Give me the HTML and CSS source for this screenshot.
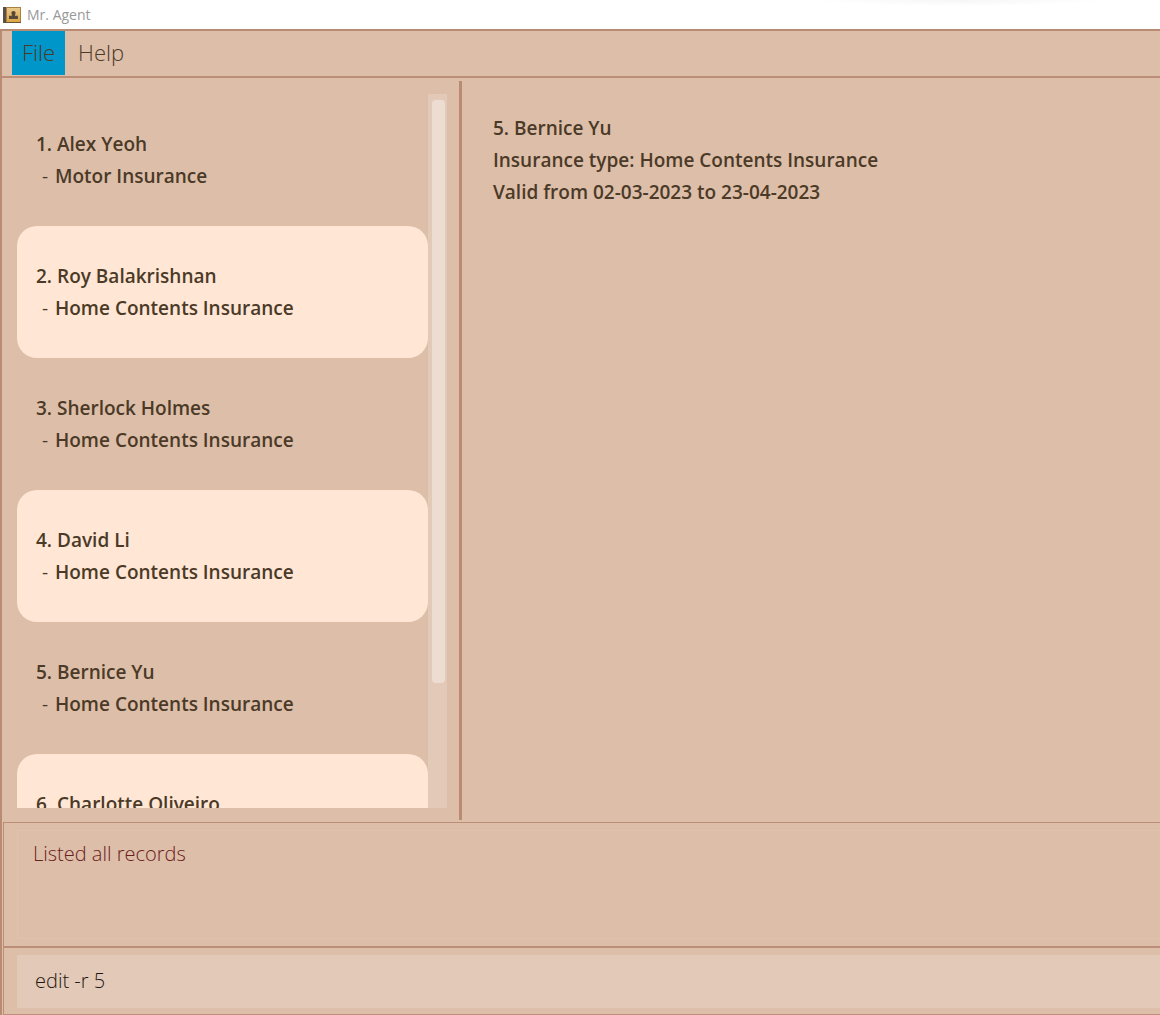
FILE: index.html
```html
<!DOCTYPE html>
<html lang="en">
<head>
<meta charset="utf-8">
<title>Mr. Agent</title>
<link rel="stylesheet" href="styles.css">
</head>
<body>
<div class="window">
  <header class="titlebar">
    <svg class="app-icon" viewBox="0 0 18 16" aria-hidden="true">
      <defs>
        <linearGradient id="cover" x1="0" y1="0" x2="0" y2="1">
          <stop offset="0" stop-color="#e8ca8c"/>
          <stop offset="1" stop-color="#dba544"/>
        </linearGradient>
      </defs>
      <rect width="18" height="16" fill="#a98142"/>
      <rect width="3" height="16" fill="#5b4d48"/>
      <rect y="15" width="18" height="1" fill="#6b5335"/>
      <rect x="4" y="1" width="13" height="14" fill="url(#cover)"/>
      <path d="M10.500 4c1.400 0 2.100.800 2.100 2 0 1-.700 1.500-.700 2.700h3V12H6V8.700h3c0-1.200-.600-1.700-.600-2.700 0-1.200.700-2 2.100-2z" fill="#57493a"/>
    </svg>
    <span class="title">Mr. Agent</span>
    <span class="shade"></span>
  </header>
  <div class="app">
    <nav class="menubar">
      <button class="menu active" type="button">File</button>
      <button class="menu" type="button">Help</button>
    </nav>
    <main class="content">
      <section class="list-pane">
        <ol class="records">
          <li class="record"><span>1. Alex Yeoh</span><span class="policy"><i class="dash">-</i>Motor Insurance</span></li>
          <li class="record"><span>2. Roy Balakrishnan</span><span class="policy"><i class="dash">-</i>Home Contents Insurance</span></li>
          <li class="record"><span>3. Sherlock Holmes</span><span class="policy"><i class="dash">-</i>Home Contents Insurance</span></li>
          <li class="record"><span>4. David Li</span><span class="policy"><i class="dash">-</i>Home Contents Insurance</span></li>
          <li class="record"><span>5. Bernice Yu</span><span class="policy"><i class="dash">-</i>Home Contents Insurance</span></li>
          <li class="record"><span>6. Charlotte Oliveiro</span></li>
        </ol>
        <div class="scrollbar"><div class="thumb"></div></div>
      </section>
      <section class="detail">
        <p>5. Bernice Yu</p>
        <p>Insurance type: Home Contents Insurance</p>
        <p>Valid from 02-03-2023 to 23-04-2023</p>
      </section>
    </main>
    <section class="result"><output class="message">Listed all records</output></section>
    <form class="command"><input class="command-input" type="text" aria-label="Command" value="edit -r 5"></form>
  </div>
</div>
</body>
</html>
```
FILE: styles.css
```css
* { box-sizing: border-box; }
body, p, ol { margin: 0; padding: 0; }

body {
  font-family: "Open Sans", "Noto Sans", sans-serif;
  color: #4b3a27;
  background: #fff;
}

.window {
  display: flex;
  flex-direction: column;
  height: 100vh;
}

.titlebar {
  position: relative;
  flex: none;
  display: flex;
  align-items: center;
  gap: 6px;
  height: 29px;
  padding-left: 3px;
  background: #fff;
}
.app-icon { width: 18px; height: 16px; }
.title { font-size: 14px; line-height: 20px; color: #999; }
.shade {
  position: absolute;
  top: 0;
  right: 56px;
  width: 288px;
  height: 6px;
  background: radial-gradient(ellipse at top, #f6f6f6, #fff 72%);
}

.app {
  flex: 1;
  min-height: 0;
  display: flex;
  flex-direction: column;
  background: #ddbea9;
  border-top: 2px solid #b98b73;
  border-left: 2px solid #b98b73;
}

.menubar {
  flex: none;
  display: flex;
  gap: 3px;
  height: 47px;
  padding: 0 10px 1px;
  border-bottom: 2px solid #bd8e77;
}
.menu {
  padding: 0 10px 2px;
  border: 0;
  background: none;
  color: #4b3a27;
  font-family: inherit;
  font-weight: 300;
  font-size: 22px;
  line-height: 42px;
}
.menu.active { background: #0096c9; }

.content {
  flex: 1;
  min-height: 0;
  display: flex;
  padding: 3px 0 2px;
  font-weight: 600;
  font-size: 19px;
  line-height: 32px;
}
.list-pane {
  flex: none;
  display: flex;
  width: 460px;
  padding: 13px 12px 12px 15px;
  border-right: 3px solid #b98b73;
}
.records {
  flex: 1;
  overflow: hidden;
  list-style: none;
}
.record {
  display: flex;
  flex-direction: column;
  height: 132px;
  padding: 34px 19px;
  border-radius: 20px;
}
.record:nth-child(even) { background: #ffe6d5; }
.dash {
  display: inline-block;
  width: 19px;
  padding-left: 6px;
  font-style: normal;
  font-weight: 400;
}
.scrollbar {
  width: 19px;
  padding: 6px 2px 6px 4px;
  background: #e3c9b7;
}
.thumb {
  width: 13px;
  height: 83%;
  border-radius: 4px;
  background: #ecdcd2;
}
.detail { flex: 1; padding: 31px; }

.result {
  flex: none;
  height: 124px;
  margin-left: 1px;
  padding: 7px 0 7px 13px;
  border-top: 1px solid #bd8e77;
  border-left: 1px solid #bd8e77;
}
.message {
  display: block;
  height: 100%;
  padding: 8px 15px;
  border: 1px solid #e0c2ae;
  border-right: 0;
  color: #6b2020;
  font-weight: 300;
  font-size: 20px;
  line-height: 30px;
}
.command {
  flex: none;
  height: 69px;
  margin-left: 1px;
  padding: 7px 0 6px 13px;
  border: solid #bd8e77;
  border-width: 2px 0 1px 1px;
}
.command-input {
  display: block;
  width: 100%;
  height: 53px;
  padding: 0 18px 2px;
  border: 0;
  border-radius: 0;
  outline: 0;
  background: #e3c9b7;
  color: #1e1712;
  font-family: inherit;
  font-weight: 300;
  font-size: 20px;
}
```
